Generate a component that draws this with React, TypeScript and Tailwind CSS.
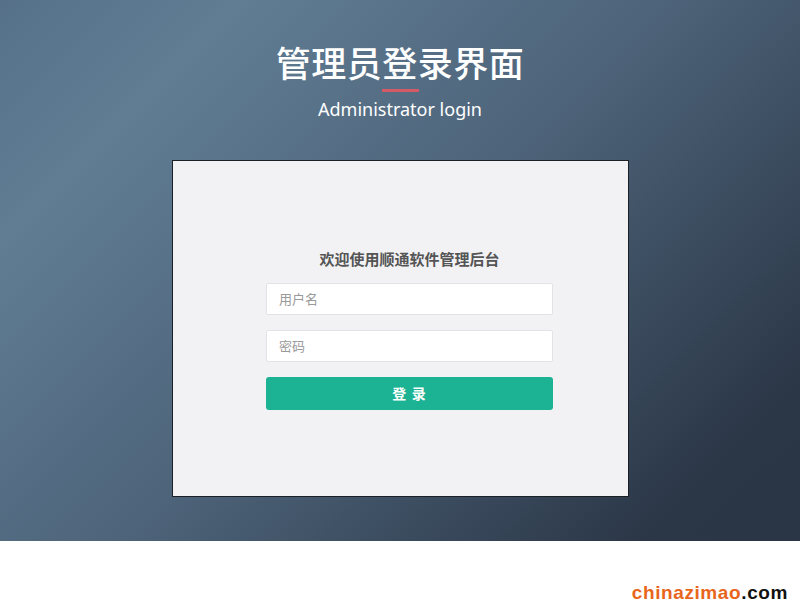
export default function App() {
  return (
    <div className="w-[800px] h-[616px] bg-white flex flex-col" style={{ fontFamily: '"Noto Sans", "Noto Sans CJK SC", sans-serif' }}>
      {/* Gradient stage */}
      <div className="h-[541px] flex flex-col items-center bg-[linear-gradient(135deg,#56708a_0%,#607d94_18%,#4d6379_50%,#2b3747_88%,#2a3545_100%)]">
        <h1 className="mt-[39px] text-[35px] leading-[46px] font-medium text-white tracking-[0.5px]" style={{ fontFamily: '"Noto Sans CJK SC", sans-serif' }}>
          管理员登录界面
        </h1>
        <div className="mt-[4px] w-[37px] h-[3px] bg-[#d45a66]" />
        <p className="mt-[5px] text-[18px] leading-[24px] text-white">Administrator login</p>

        {/* Login card */}
        <div className="mt-[39px] w-[457px] h-[337px] border border-[#1b1f26] bg-[#f2f2f4] flex flex-col items-center pl-[19px]">
          <h2 className="mt-[86px] text-[15px] leading-[24px] font-bold text-[#555]" style={{ fontFamily: '"Noto Sans CJK SC", sans-serif' }}>
            欢迎使用顺通软件管理后台
          </h2>
          <div className="mt-[12px] w-[287px] flex flex-col gap-[15px]">
            <input
              placeholder="用户名"
              className="h-[32px] w-full bg-white border border-[#e3e3e5] rounded-[2px] px-[12px] text-[13px] placeholder:text-[#999] outline-none"
            />
            <input
              type="password"
              placeholder="密码"
              className="h-[32px] w-full bg-white border border-[#e3e3e5] rounded-[2px] px-[12px] text-[13px] placeholder:text-[#999] outline-none"
            />
            <button className="h-[33px] w-full rounded-[3px] bg-[#1bb394] text-white text-[14px] font-bold tracking-[1px]">
              登 录
            </button>
          </div>
        </div>
      </div>

      {/* Watermark */}
      <div className="flex-1 flex items-end justify-end pr-[12px] pb-[13px]">
        <span className="text-[19px] leading-[20px] font-bold tracking-[0.6px]" style={{ fontFamily: '"Liberation Sans", Arial, sans-serif' }}>
          <span className="text-[#e8661c]">chinazimao</span>
          <span className="text-[#111]">.com</span>
        </span>
      </div>
    </div>
  );
}
